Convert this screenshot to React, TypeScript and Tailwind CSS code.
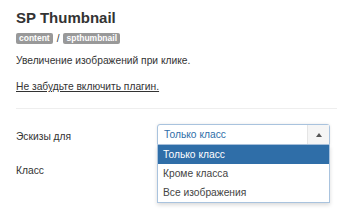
import React from 'react';

const options = ['Только класс', 'Кроме класса', 'Все изображения'];

export default function App() {
  return (
    <div className="w-[337px] h-[210px] overflow-hidden bg-white text-[#333] font-['Liberation_Sans',Arial,sans-serif] text-[10.25px] leading-[16px]">
      <div className="pl-4 pt-[9px]">
        <h2 className="text-[15px] leading-[18px] font-bold">SP Thumbnail</h2>
        <div className="mt-[6px] flex items-center gap-[4px] text-[8.5px] leading-[11px] font-bold text-white">
          <span className="bg-[#999] rounded-[2px] px-[3px]">content</span>
          <span className="text-[#333] font-normal text-[10px]">/</span>
          <span className="bg-[#999] rounded-[2px] px-[3px]">spthumbnail</span>
        </div>
        <p className="mt-[9px]">Увеличение изображений при клике.</p>
        <p className="mt-[10px] underline">Не забудьте включить плагин.</p>
        <hr className="mt-[13px] border-0 border-t border-[#eee]" />

        <div className="mt-[15px] flex">
          <div className="w-[141px] pt-[5px]">Эскизы для</div>
          <div className="relative w-[173px]">
            <div className="flex h-[21px] border border-[#a9c3de] rounded-t-[3px] bg-white shadow-[0_0_3px_rgba(0,0,0,0.1)]">
              <div className="flex-1 pl-[6px] leading-[19px] text-[#2f6ea8]">Только класс</div>
              <div className="w-[22px] flex items-center justify-center bg-[#f5f5f5] border-l border-[#e5e5e5]">
                <svg width="6" height="4" viewBox="0 0 6 4">
                  <path d="M0 4 L3 0 L6 4 Z" fill="#555" />
                </svg>
              </div>
            </div>
            <ul className="absolute left-0 top-[21px] w-full border border-t-0 border-[#a9c3de] bg-white shadow-[0_2px_4px_rgba(0,0,0,0.15)]">
              {options.map((o, i) => (
                <li
                  key={o}
                  className={
                    i === 0
                      ? 'h-[19px] pl-[5px] leading-[19px] bg-[#2f6ea8] text-white'
                      : 'h-[19px] pl-[5px] leading-[19px] text-[#444]'
                  }
                >
                  {o}
                </li>
              ))}
            </ul>
          </div>
        </div>
        <div className="mt-[18px]">Класс</div>
      </div>
    </div>
  );
}
